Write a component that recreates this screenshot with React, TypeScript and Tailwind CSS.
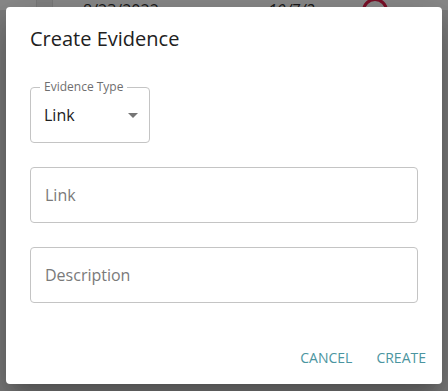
import React from 'react';

// Backdrop row peeking out above the dialog
function BackdropRow() {
  return (
    <div className="flex h-[10px] items-end overflow-hidden bg-[#8a8a8a] text-[#1a1a1a]">
      <div className="h-full w-[37px] border-r border-[#7a7a7a]" />
      <div className="h-full w-[16px] border-r border-[#7a7a7a] bg-[#828282]" />
      <div className="flex h-full w-[190px] items-end pl-[30px]">
        <span className="-mb-[8px] text-[16px] leading-none">8/23/2022</span>
      </div>
      <div className="flex h-full flex-1 items-end pl-[25px]">
        <span className="-mb-[8px] text-[16px] italic leading-none">10/7/2</span>
        <div className="-mb-[14px] ml-[48px] h-[26px] w-[26px] rounded-full border-[3px] border-[#7a1028]" />
      </div>
    </div>
  );
}

function OutlinedField({ placeholder }: { placeholder: string }) {
  return (
    <div className="flex h-[56px] items-center rounded-[4px] border border-[#c4c4c4] px-[14px]">
      <span className="text-[16px] text-[#7a7a7a]">{placeholder}</span>
    </div>
  );
}

export default function App() {
  return (
    <div
      className="relative h-[391px] w-[448px] overflow-hidden bg-[#7b7b7b]"
      style={{ fontFamily: '"Open Sans", "Noto Sans", sans-serif' }}
    >
      <BackdropRow />
      <div className="absolute left-[6px] top-[7px] flex h-[377px] w-[436px] flex-col rounded-[4px] bg-white shadow-[0_11px_15px_-7px_rgba(0,0,0,0.2),0_24px_38px_3px_rgba(0,0,0,0.14),0_9px_46px_8px_rgba(0,0,0,0.12)]">
        <h2 className="px-[24px] pt-[16px] text-[20px] leading-[32px] text-[#212121]">Create Evidence</h2>

        <div className="flex flex-col gap-[24px] px-[24px] pt-[32px]">
          {/* Select */}
          <div className="relative flex h-[56px] w-[120px] items-center rounded-[4px] border border-[#c4c4c4] pl-[13px] pr-[4px]">
            <span className="absolute -top-[9px] left-[9px] bg-white px-[4px] text-[12px] leading-[16px] text-[#6f6f6f]">
              Evidence Type
            </span>
            <span className="flex-1 text-[16px] text-[#212121]">Link</span>
            <svg width="24" height="24" viewBox="0 0 24 24" className="fill-[#757575]">
              <path d="M7 10l5 5 5-5z" />
            </svg>
          </div>

          <OutlinedField placeholder="Link" />
          <OutlinedField placeholder="Description" />
        </div>

        <div className="mt-auto flex justify-end gap-[24px] pb-[16px] pr-[16px]">
          <button className="text-[14px] uppercase text-[#4b95a0]">Cancel</button>
          <button className="text-[14px] uppercase text-[#4b95a0]">Create</button>
        </div>
      </div>
    </div>
  );
}
